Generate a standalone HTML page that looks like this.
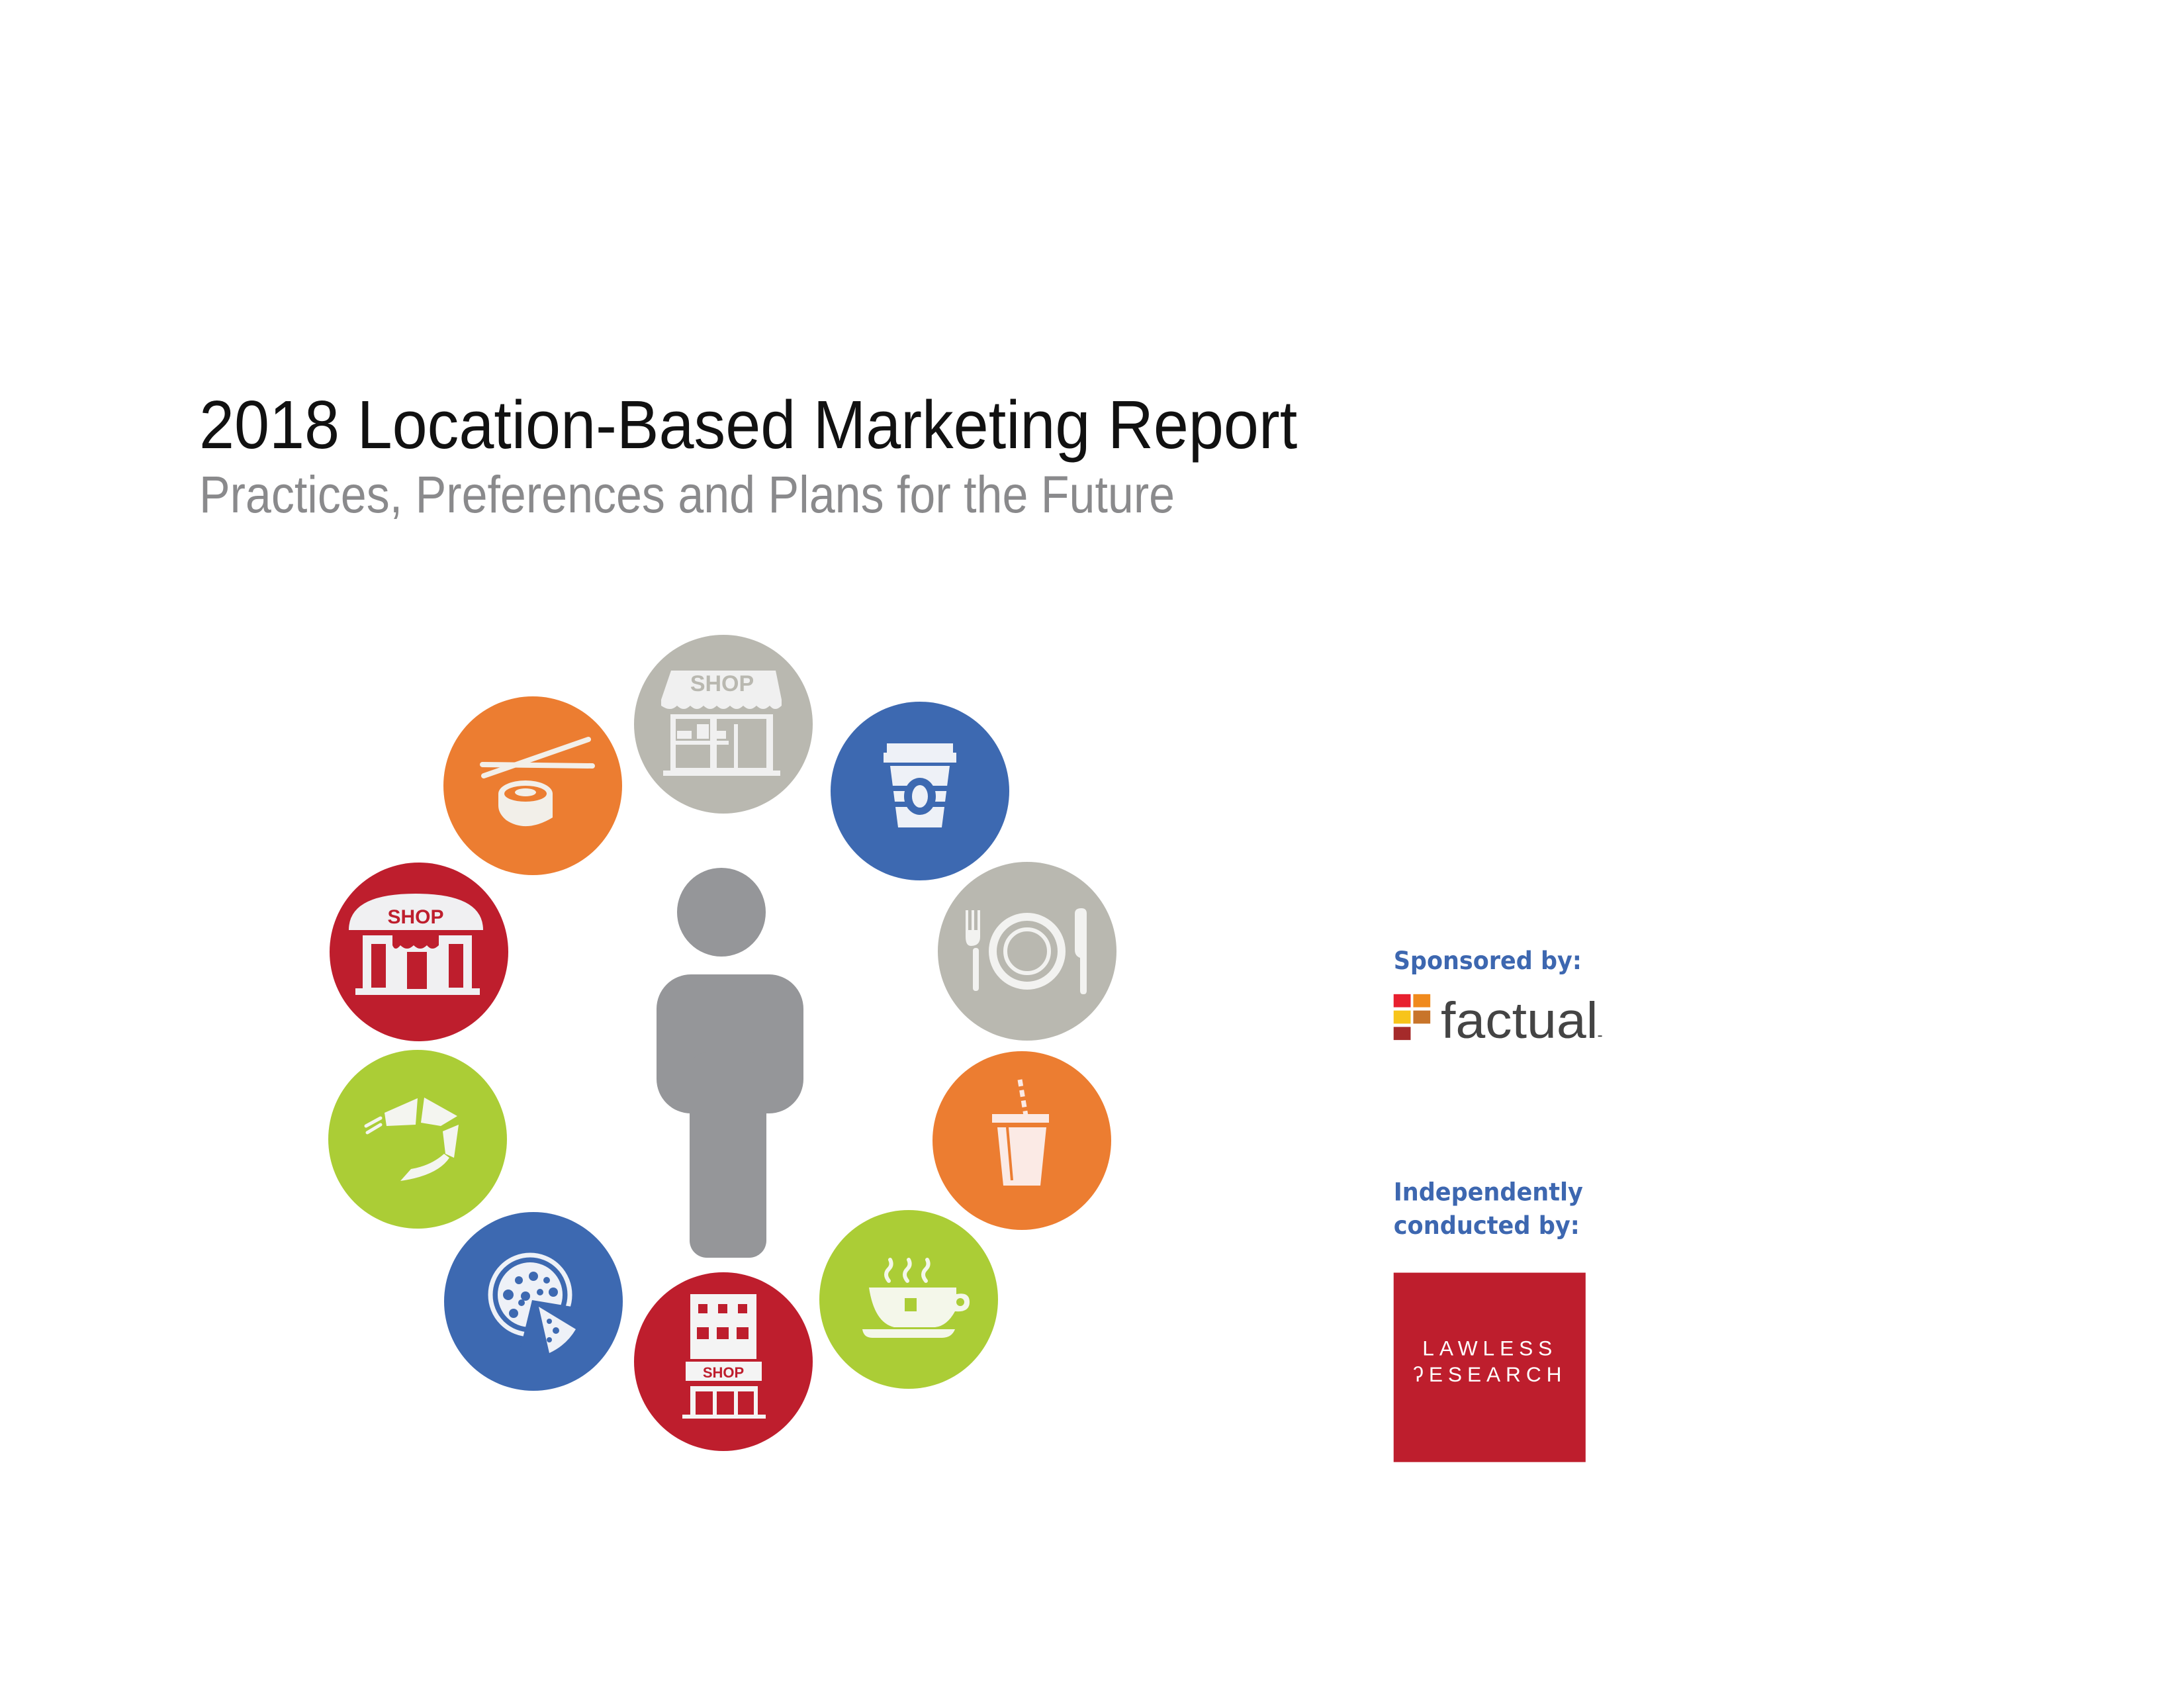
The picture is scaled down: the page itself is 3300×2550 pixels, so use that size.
<!DOCTYPE html>
<html><head><meta charset="utf-8"><style>
html,body{margin:0;padding:0;background:#fff;width:3300px;height:2550px;overflow:hidden}
svg{display:block}
</style></head><body>
<svg width="3300" height="2550" viewBox="0 0 3300 2550" xmlns="http://www.w3.org/2000/svg" font-family="Liberation Sans, sans-serif">
<g transform="scale(0.99)">
<text x="304" y="684" font-size="104" fill="#111" textLength="1676" lengthAdjust="spacingAndGlyphs">2018 Location-Based Marketing Report</text>
<text x="304" y="782" font-size="80" fill="#8a8a8c" textLength="1489" lengthAdjust="spacingAndGlyphs">Practices, Preferences and Plans for the Future</text>
</g>

<!-- person -->
<g fill="#959699">
<circle cx="1090" cy="1378" r="67"/>
<rect x="992" y="1472" width="222" height="210" rx="52"/>
<rect x="1042" y="1590" width="116" height="310" rx="26"/>
</g>

<!-- gray shop -->
<g transform="translate(1093,1094)">
<circle r="135" fill="#b9b8b0"/>
<g fill="#f0f0f0">
<polygon points="-79,-81 79,-81 88,-37 -94,-37"/>
<path d="M-94,-37 H88 V-28 Q78,-18 70,-28 Q60,-18 50,-28 Q40,-18 30,-28 Q20,-18 10,-28 Q0,-18 -10,-28 Q-20,-18 -30,-28 Q-40,-18 -50,-28 Q-60,-18 -70,-28 Q-80,-18 -94,-28 Z"/>
<path d="M-80,-15 H75 V72 H-80 Z M-72,-8 V66 H-20 V-8 Z M-10,-8 V66 H65 V-8 Z" fill-rule="evenodd"/>
<rect x="-91" y="70" width="177" height="8"/>
<rect x="-70" y="10" width="22" height="12"/><rect x="-40" y="0" width="18" height="22"/><rect x="-18" y="10" width="22" height="12"/>
<rect x="-72" y="25" width="80" height="6"/>
<rect x="16" y="0" width="6" height="66"/>
</g>
<text x="-2" y="-50" font-size="34" font-weight="bold" fill="#b9b8b0" text-anchor="middle">SHOP</text>
</g>

<!-- orange sushi -->
<g transform="translate(805,1187)">
<circle r="135" fill="#ec7d31"/>
<g stroke="#f2efe9" stroke-width="8" stroke-linecap="round" fill="none">
<line x1="-74" y1="-15" x2="84" y2="-70"/>
<line x1="-76" y1="-32" x2="90" y2="-30"/>
</g>
<g fill="#f2efe9">
<path d="M-52,12 A41,20 0 0 1 30,12 V48 Q-10,72 -40,52 Q-52,42 -52,30 Z"/>
</g>
<ellipse cx="-11" cy="12" rx="32" ry="12" fill="#ec7d31"/>
<ellipse cx="-11" cy="10" rx="16" ry="6" fill="#f2efe9"/>
</g>

<!-- blue cup -->
<g transform="translate(1390,1195)">
<circle r="135" fill="#3d69b1"/>
<g fill="#eef1f7">
<path d="M-50,-72 H50 V-58 H55 V-43 H-55 V-58 H-50 Z"/>
<polygon points="-45,-38 45,-38 33,55 -33,55"/>
</g>
<rect x="-50" y="-8" width="100" height="8" fill="#3d69b1"/>
<rect x="-50" y="16" width="100" height="8" fill="#3d69b1"/>
<ellipse cx="0" cy="8" rx="24" ry="28" fill="#3d69b1"/>
<ellipse cx="0" cy="8" rx="12" ry="17" fill="#eef1f7"/>
</g>

<!-- red shop -->
<g transform="translate(633,1438)">
<circle r="135" fill="#be1e2d"/>
<g fill="#f0f0f2">
<path d="M-106,-33 Q-106,-88 -5,-88 Q97,-88 97,-33 Z"/>
<rect x="-85" y="-25" width="165" height="82"/>
<rect x="-96" y="55" width="188" height="10"/>
</g>
<text x="-5" y="-43" font-size="30" font-weight="bold" fill="#be1e2d" text-anchor="middle">SHOP</text>
<g fill="#be1e2d">
<rect x="-72" y="-12" width="22" height="66"/><rect x="45" y="-12" width="22" height="66"/>
<rect x="-18" y="0" width="30" height="56"/>
<path d="M-40,-25 H30 V-10 Q20,0 12,-10 Q2,0 -8,-10 Q-18,0 -28,-10 Q-36,0 -40,-10 Z"/>
</g>
</g>

<!-- gray plate -->
<g transform="translate(1552,1437)">
<circle r="135" fill="#b9b8b0"/>
<g fill="none" stroke="#f2f2f0">
<circle cx="0" cy="0" r="52" stroke-width="12"/>
<circle cx="0" cy="0" r="33" stroke-width="6"/>
</g>
<g fill="#f2f2f0">
<rect x="-82" y="-5" width="9" height="65" rx="4"/>
<path d="M-93,-62 h4 v30 h5 v-30 h4 v30 h5 v-30 h4 v40 q0,14 -14,14 q-8,0 -8,-14 Z"/>
<path d="M82,-65 q8,0 8,8 v117 q0,5 -5,5 q-5,0 -5,-5 v-50 q-8,-3 -8,-12 v-55 q0,-8 10,-8 Z"/>
</g>
</g>

<!-- green shrimp -->
<g transform="translate(631,1721)" fill="#f4f5f0">
<circle r="135" fill="#abcd36"/>
<polygon points="-50,-40 0,-62 -3,-22 -47,-20"/>
<polygon points="10,-63 60,-35 35,-20 5,-25"/>
<polygon points="38,-12 62,-22 55,28 42,22"/>
<path d="M-26,63 Q30,55 48,28 L40,22 Q20,40 -10,45 Z"/>
<path d="M-78,-20 l22,-12 M-76,-10 l20,-12" stroke="#f4f5f0" stroke-width="5" stroke-linecap="round"/>
</g>

<!-- orange drink -->
<g transform="translate(1544,1723)">
<circle r="135" fill="#ec7d31"/>
<path d="M-3,-92 L6,-38" stroke="#fbeae5" stroke-width="7" stroke-dasharray="10,6"/>
<rect x="-45" y="-40" width="86" height="13" fill="#fbeae5"/>
<polygon points="-37,-20 37,-20 28,68 -28,68" fill="#fbeae5"/>
<line x1="-22" y1="-20" x2="-15" y2="60" stroke="#ec7d31" stroke-width="4"/>
</g>

<!-- blue pizza -->
<g transform="translate(806,1966)">
<circle r="135" fill="#3d69b1"/>
<circle cx="-5" cy="-10" r="60" fill="none" stroke="#eef1f7" stroke-width="7"/>
<circle cx="-5" cy="-10" r="49" fill="#eef1f7"/>
<polygon points="-2,-2 70,10 70,80 -22,80" fill="#3d69b1"/>
<path d="M8,8 L64,42 Q50,66 24,78 Z" fill="#eef1f7"/>
<g fill="#3d69b1">
<circle cx="-38" cy="-10" r="8"/><circle cx="-22" cy="-32" r="6"/><circle cx="0" cy="-38" r="7"/><circle cx="20" cy="-32" r="5"/>
<circle cx="-12" cy="-8" r="7"/><circle cx="10" cy="-14" r="5"/><circle cx="30" cy="-14" r="7"/><circle cx="-30" cy="18" r="7"/><circle cx="-18" cy="2" r="5"/>
<circle cx="24" cy="30" r="4"/><circle cx="34" cy="44" r="5"/><circle cx="24" cy="58" r="4"/>
</g>
</g>

<!-- red building -->
<g transform="translate(1093,2057)">
<circle r="135" fill="#be1e2d"/>
<g fill="#f4f4f4">
<rect x="-50" y="-102" width="100" height="98"/>
<rect x="-57" y="0" width="115" height="29"/>
<path d="M-50,37 H52 V80 H-50 Z M-42,45 V80 H-16 V45 Z M-10,45 V80 H16 V45 Z M22,45 V80 H46 V45 Z" fill-rule="evenodd"/>
<rect x="-62" y="80" width="126" height="6"/>
</g>
<g fill="#be1e2d">
<rect x="-38" y="-87" width="14" height="14"/><rect x="-8" y="-87" width="14" height="14"/><rect x="22" y="-87" width="14" height="14"/>
<rect x="-40" y="-52" width="18" height="18"/><rect x="-10" y="-52" width="18" height="18"/><rect x="20" y="-52" width="18" height="18"/>
</g>
<text x="0" y="24" font-size="22" font-weight="bold" fill="#be1e2d" text-anchor="middle">SHOP</text>
</g>

<!-- green tea -->
<g transform="translate(1373,1963)">
<circle r="135" fill="#abcd36"/>
<path d="M-60,-18 H72 V-8 Q92,-12 92,4 Q92,20 70,18 Q58,40 40,42 H-22 Q-52,35 -60,-18 Z" fill="#f4f7ea"/>
<circle cx="78" cy="4" r="6" fill="#abcd36"/>
<path d="M-70,45 H70 Q65,58 50,58 H-55 Q-68,58 -70,45 Z" fill="#f4f7ea"/>
<rect x="-6" y="-2" width="18" height="20" fill="#abcd36"/>
<g fill="none" stroke="#f4f7ea" stroke-width="6" stroke-linecap="round">
<path d="M-30,-28 q-8,-10 0,-18 q6,-6 2,-14"/><path d="M-2,-28 q-8,-10 0,-18 q6,-6 2,-14"/><path d="M26,-28 q-8,-10 0,-18 q6,-6 2,-14"/>
</g>
</g>

<!-- right side -->
<g transform="scale(0.99)">
<g font-weight="bold" fill="#3d67b0" font-family="DejaVu Sans, Liberation Sans, sans-serif">
<text x="2127" y="1479" font-size="38" textLength="287" lengthAdjust="spacingAndGlyphs">Sponsored by:</text>
<text x="2127" y="1832" font-size="38" textLength="289" lengthAdjust="spacingAndGlyphs">Independently</text>
<text x="2127" y="1883" font-size="38" textLength="284" lengthAdjust="spacingAndGlyphs">conducted by:</text>
</g>
<rect x="2127" y="1517" width="26" height="20" fill="#e8202f"/>
<rect x="2157" y="1517" width="26" height="20" fill="#f08a1d"/>
<rect x="2127" y="1542" width="26" height="20" fill="#f7c41a"/>
<rect x="2157" y="1542" width="26" height="20" fill="#c8742a"/>
<rect x="2127" y="1567" width="26" height="20" fill="#a52a2a"/>
<text x="2199" y="1584" font-size="78" fill="#444" textLength="240" lengthAdjust="spacingAndGlyphs">factual</text>
<rect x="2439" y="1580" width="6" height="2" fill="#444"/>
<rect x="2127" y="1942" width="293" height="289" fill="#be1e2d"/>
<text x="2274" y="2068" font-size="32" fill="#fff" text-anchor="middle" letter-spacing="8">LAWLESS</text>
<text x="2274" y="2108" font-size="32" fill="#fff" text-anchor="middle" letter-spacing="8">ʔESEARCH</text>
</g>
</svg>
</body></html>
